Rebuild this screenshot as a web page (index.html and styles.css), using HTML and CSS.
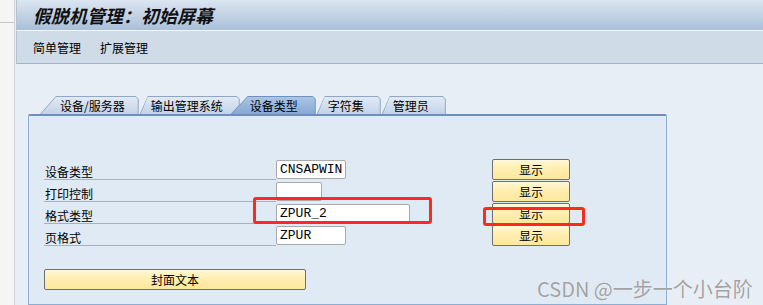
FILE: index.html
```html
<!DOCTYPE html>
<html lang="zh-CN">

<head>
    <meta charset="UTF-8">
    <title>假脱机管理：初始屏幕</title>
    <link rel="stylesheet" href="styles.css">
</head>

<body>
    <!-- Bande gauche -->
    <div class="side">
        <div class="side-top"></div>
    </div>

    <div class="main">
        <!-- Titre -->
        <header class="titlebar">
            <h1>假脱机管理：初始屏幕</h1>
        </header>

        <!-- Menu -->
        <nav class="menubar">
            <span>简单管理</span>
            <span>扩展管理</span>
        </nav>

        <div class="content">
            <!-- Onglets -->
            <div class="tabs">
                <div class="tab first"><span>设备/服务器</span></div>
                <div class="tab"><span>输出管理系统</span></div>
                <div class="tab active"><span>设备类型</span></div>
                <div class="tab"><span>字符集</span></div>
                <div class="tab"><span>管理员</span></div>
            </div>

            <div class="panel">
                <div class="form">
                    <label>设备类型</label>
                    <div class="field"><input class="w70" type="text" value="CNSAPWIN" readonly></div>
                    <button class="sap-btn">显示</button>

                    <label>打印控制</label>
                    <div class="field"><input class="w46" type="text" value="" readonly></div>
                    <button class="sap-btn">显示</button>

                    <label>格式类型</label>
                    <div class="field"><input class="w134" type="text" value="ZPUR_2" readonly></div>
                    <button class="sap-btn">显示</button>

                    <label>页格式</label>
                    <div class="field"><input class="w70" type="text" value="ZPUR" readonly></div>
                    <button class="sap-btn">显示</button>
                </div>

                <button class="sap-btn cover">封面文本</button>
            </div>
        </div>
    </div>

    <!-- Annotations -->
    <div class="mark mark-field"></div>
    <div class="mark mark-btn"></div>
    <div class="watermark">CSDN @一步一个小台阶</div>
</body>

</html>
```

FILE: styles.css
```css
* {
    box-sizing: border-box;
}

body {
    margin: 0;
    height: 305px;
    overflow: hidden;
    position: relative;
    display: flex;
    font-family: "Noto Sans CJK SC", sans-serif;
    font-size: 12px;
    color: #000;
    background: #e8eef6;
}

.side {
    width: 15px;
    flex: none;
    background: #f5f5f6;
    border-right: 1px solid #d2d5d9;
}

.side-top {
    height: 23px;
    border-bottom: 1px solid #c8c8c8;
}

.main {
    flex: 1;
    min-width: 0;
    display: flex;
    flex-direction: column;
}

.titlebar {
    height: 31px;
    margin-left: 1px;
    padding-left: 16px;
    display: flex;
    align-items: center;
    background: linear-gradient(#dce6f1, #a9c0d9);
    border-left: 1px solid #b3c2d2;
    border-bottom: 1px solid #f3f6fa;
}

.titlebar h1 {
    margin: 0;
    font-size: 18px;
    line-height: 1;
    font-weight: bold;
    font-style: italic;
    color: #111;
}

.menubar {
    height: 33px;
    margin-left: 1px;
    padding-left: 16px;
    display: flex;
    align-items: center;
    gap: 19px;
    background: #cfdce8;
    border-left: 1px solid #b3c2d2;
    border-bottom: 1px solid #a3b3c4;
}

.content {
    flex: 1;
    display: flex;
    flex-direction: column;
    padding: 32px 0 0 13px;
}

/* Onglets */
.tabs {
    display: flex;
    align-items: flex-end;
    height: 18px;
    padding-left: 12px;
}

.tab {
    --s: 8px;
    position: relative;
    height: 18px;
    margin-right: 1px;
    padding: 1px 1px 0 1px;
    background: #8ea7c6;
    clip-path: polygon(var(--s) 0, calc(100% - 3px) 0, 100% 3px, 100% 100%, 0 100%);
}

.tab span {
    display: block;
    height: 17px;
    line-height: 17px;
    padding: 0 16px 0 10px;
    white-space: nowrap;
    background: linear-gradient(#e2eaf5, #c2d3e8);
    clip-path: polygon(calc(var(--s) - 1px) 0, calc(100% - 2px) 0, 100% 2px, 100% 100%, 0 100%);
}

.tab.first {
    --s: 16px;
}

.tab.first span {
    padding: 0 13px 0 19px;
}

.tab.active {
    --s: 17px;
    margin-left: -10px;
    z-index: 2;
    background: #6f91be;
}

.tab.active span {
    padding: 0 17px 0 18px;
    background: linear-gradient(#abc5e4, #86a8d3);
}

/* Panneau */
.panel {
    flex: 1;
    width: 639px;
    padding: 43px 0 0 15px;
    background: #dfeaf5;
    border: 1px solid #8eadd3;
    border-top: 2px solid #6c8fbe;
    border-radius: 2px 2px 0 0;
}

.form {
    display: grid;
    grid-template-columns: 232px 216px 78px;
    grid-auto-rows: 21px;
    row-gap: 1px;
}

.form label {
    display: flex;
    align-items: flex-end;
    padding-left: 1px;
    line-height: 15px;
    border-bottom: 1px solid #a7b0bb;
}

.field {
    display: flex;
    align-items: flex-start;
    padding-top: 1px;
}

.field input {
    height: 19px;
    padding: 0 3px;
    font-family: "Liberation Mono", monospace;
    font-size: 13px;
    color: #000;
    background: #fff;
    border: 1px solid #a9a9a9;
    border-radius: 2px;
    outline: none;
}

.w46 {
    width: 46px;
}

.w70 {
    width: 70px;
}

.w134 {
    width: 134px;
}

.sap-btn {
    height: 21px;
    padding: 0;
    font-family: "Noto Sans CJK SC", sans-serif;
    font-size: 12px;
    line-height: 19px;
    color: #000;
    background: linear-gradient(#fff9dc 0%, #fff0b6 35%, #ffe79c 100%);
    border: 1px solid #6f6f6f;
    border-radius: 2px;
}

.cover {
    display: block;
    width: 262px;
    margin-top: 23px;
}

/* Annotations */
.mark {
    position: absolute;
    border: 3px solid #ff2a1c;
    border-radius: 3px;
}

.mark-field {
    left: 253px;
    top: 197px;
    width: 179px;
    height: 27px;
}

.mark-btn {
    left: 483px;
    top: 207px;
    width: 102px;
    height: 19px;
}

.watermark {
    position: absolute;
    left: 537px;
    top: 274px;
    font-size: 20px;
    color: #a2a2a2;
    text-shadow: 0 0 1px #fff;
    white-space: nowrap;
}
```
